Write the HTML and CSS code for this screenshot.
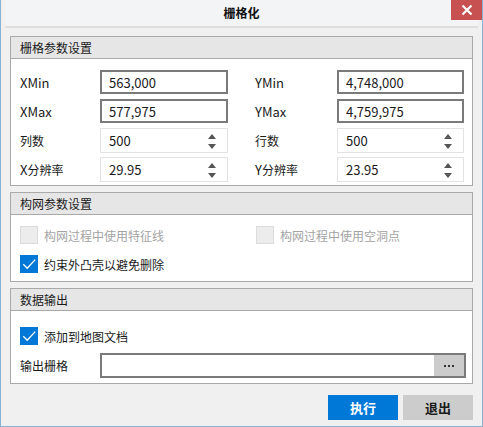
FILE: index.html
```html
<!DOCTYPE html>
<html lang="zh">
<head>
<meta charset="utf-8">
<title>栅格化</title>
<link rel="stylesheet" href="styles.css">
</head>
<body>
<div class="window">
  <div class="titlebar">
    <span class="title">栅格化</span>
    <span class="close"><svg width="12" height="12" viewBox="0 0 12 12"><path d="M1.5 1.5 L10.5 10.5 M10.5 1.5 L1.5 10.5" stroke="#fff" stroke-width="2.2"/></svg></span>
  </div>
  <div class="content">
    <section class="group">
      <div class="group-head">栅格参数设置</div>
      <div class="group-body grid">
        <label class="lbl latin">XMin</label>
        <div class="field strong">563,000</div>
        <span></span>
        <label class="lbl latin">YMin</label>
        <div class="field strong">4,748,000</div>

        <label class="lbl latin">XMax</label>
        <div class="field strong">577,975</div>
        <span></span>
        <label class="lbl latin">YMax</label>
        <div class="field strong">4,759,975</div>

        <label class="lbl">列数</label>
        <div class="field spin">500<span class="arrows"><i class="up"></i><i class="down"></i></span></div>
        <span></span>
        <label class="lbl">行数</label>
        <div class="field spin">500<span class="arrows"><i class="up"></i><i class="down"></i></span></div>

        <label class="lbl"><span class="latin">X</span>分辨率</label>
        <div class="field spin">29.95<span class="arrows"><i class="up"></i><i class="down"></i></span></div>
        <span></span>
        <label class="lbl"><span class="latin">Y</span>分辨率</label>
        <div class="field spin">23.95<span class="arrows"><i class="up"></i><i class="down"></i></span></div>
      </div>
    </section>

    <section class="group">
      <div class="group-head">构网参数设置</div>
      <div class="group-body checks">
        <div class="check-row two">
          <div class="check disabled first"><span class="box"></span>构网过程中使用特征线</div>
          <div class="check disabled"><span class="box"></span>构网过程中使用空洞点</div>
        </div>
        <div class="check-row">
          <div class="check"><span class="box on"><svg width="18" height="18" viewBox="0 0 18 18"><path d="M3.3 9.3 L7.2 13.2 L15.2 4.6" fill="none" stroke="#fff" stroke-width="1.3"/></svg></span>约束外凸壳以避免删除</div>
        </div>
      </div>
    </section>

    <section class="group">
      <div class="group-head">数据输出</div>
      <div class="group-body output">
        <div class="check"><span class="box on"><svg width="18" height="18" viewBox="0 0 18 18"><path d="M3.3 9.3 L7.2 13.2 L15.2 4.6" fill="none" stroke="#fff" stroke-width="1.3"/></svg></span>添加到地图文档</div>
        <div class="out-row">
          <label class="lbl">输出栅格</label>
          <div class="path-field"><span class="path-input"></span><span class="browse"><i></i><i></i><i></i></span></div>
        </div>
      </div>
    </section>

    <div class="actions">
      <button class="btn primary">执行</button>
      <button class="btn">退出</button>
    </div>
  </div>
</div>
</body>
</html>
```

FILE: styles.css
```css
* { box-sizing: border-box; }
html, body { margin: 0; padding: 0; }
body {
  width: 483px;
  height: 427px;
  font-family: "Noto Sans CJK SC", "Noto Sans", sans-serif;
  font-size: 12px;
  color: #1a1a1a;
  background: #f0f0f0;
  overflow: hidden;
}
.window {
  width: 483px;
  height: 427px;
  border: 1px solid #86b2d6;
  border-top: none;
  background: #f0f0f0;
  display: flex;
  flex-direction: column;
}
.titlebar {
  height: 28px;
  position: relative;
  display: flex;
  align-items: center;
  justify-content: center;
  background: #f3f4f6;
  border-bottom: 2px solid #dedede;
  margin: 0 4px;
}
.title {
  font-weight: bold;
  font-size: 12px;
  color: #111;
  margin-top: -1px;
}
.close {
  position: absolute;
  right: -4px;
  top: 0;
  width: 31px;
  height: 20px;
  background: #c75050;
  display: flex;
  align-items: center;
  justify-content: center;
}
.content {
  padding: 8px 9px 0 9px;
  display: flex;
  flex-direction: column;
  gap: 6px;
  flex: 1;
}
.group {
  border: 1px solid #a9a9a9;
  background: #fff;
}
.group-head {
  height: 22px;
  line-height: 21px;
  background: #e6e6e6;
  border-bottom: 1px solid #a9a9a9;
  padding-left: 9px;
  color: #1a1a1a;
}
.grid {
  display: grid;
  grid-template-columns: 80px 128px 27px 82px 127px;
  grid-auto-rows: 24px;
  row-gap: 5px;
  padding: 11px 0 4px 9px;
  align-items: center;
}
.lbl { color: #1a1a1a; }
.latin { font-size: 13px; }
.field {
  height: 24px;
  display: flex;
  align-items: center;
  padding-left: 8px;
  background: #fff;
  font-size: 13px;
}
.field.strong { border: 2px solid #7a7a7a; padding-left: 7px; }
.field.spin {
  border: 1px solid #e3e3e3;
  height: 25px;
  position: relative;
}
.arrows {
  position: absolute;
  right: 11px;
  top: 5px;
  display: flex;
  flex-direction: column;
  gap: 5px;
}
.arrows i { display: block; width: 0; height: 0; border-left: 4px solid transparent; border-right: 4px solid transparent; }
.arrows .up { border-bottom: 5px solid #555; }
.arrows .down { border-top: 5px solid #555; }
.checks {
  padding: 11px 0 8px 9px;
  display: flex;
  flex-direction: column;
  gap: 11px;
}
.check-row { display: flex; }
.check-row.two .check.first { width: 236px; flex: none; }
.check {
  display: flex;
  align-items: center;
  height: 18px;
  gap: 6px;
}
.box {
  width: 18px;
  height: 18px;
  display: inline-block;
  border: 1px solid #333;
  background: #fff;
  flex: none;
}
.check.disabled { color: #a3a3a3; }
.check.disabled .box { border: 1px solid #dcdcdc; background: #ececec; }
.box.on { border: none; background: #0078d7; }
.box svg { display: block; }
.output {
  padding: 16px 6px 5px 9px;
  display: flex;
  flex-direction: column;
  gap: 8px;
}
.out-row {
  display: flex;
  align-items: center;
}
.out-row .lbl { width: 80px; }
.path-field {
  flex: 1;
  height: 25px;
  border: 2px solid #7a7a7a;
  display: flex;
}
.path-input { flex: 1; background: #fff; }
.browse {
  width: 30px;
  background: #cccccc;
  display: flex;
  align-items: center;
  justify-content: center;
  gap: 2px;
}
.browse i {
  display: block;
  width: 2px;
  height: 2px;
  background: #333;
}
.actions {
  display: flex;
  justify-content: flex-end;
  gap: 5px;
  margin-top: 5px;
}
.btn {
  width: 70px;
  height: 25px;
  border: none;
  background: #cccccc;
  color: #1a1a1a;
  font-family: "Noto Sans CJK SC", "Noto Sans", sans-serif;
  font-size: 13px;
  font-weight: bold;
  padding: 0;
}
.btn.primary { background: #0078d7; color: #fff; }
```
